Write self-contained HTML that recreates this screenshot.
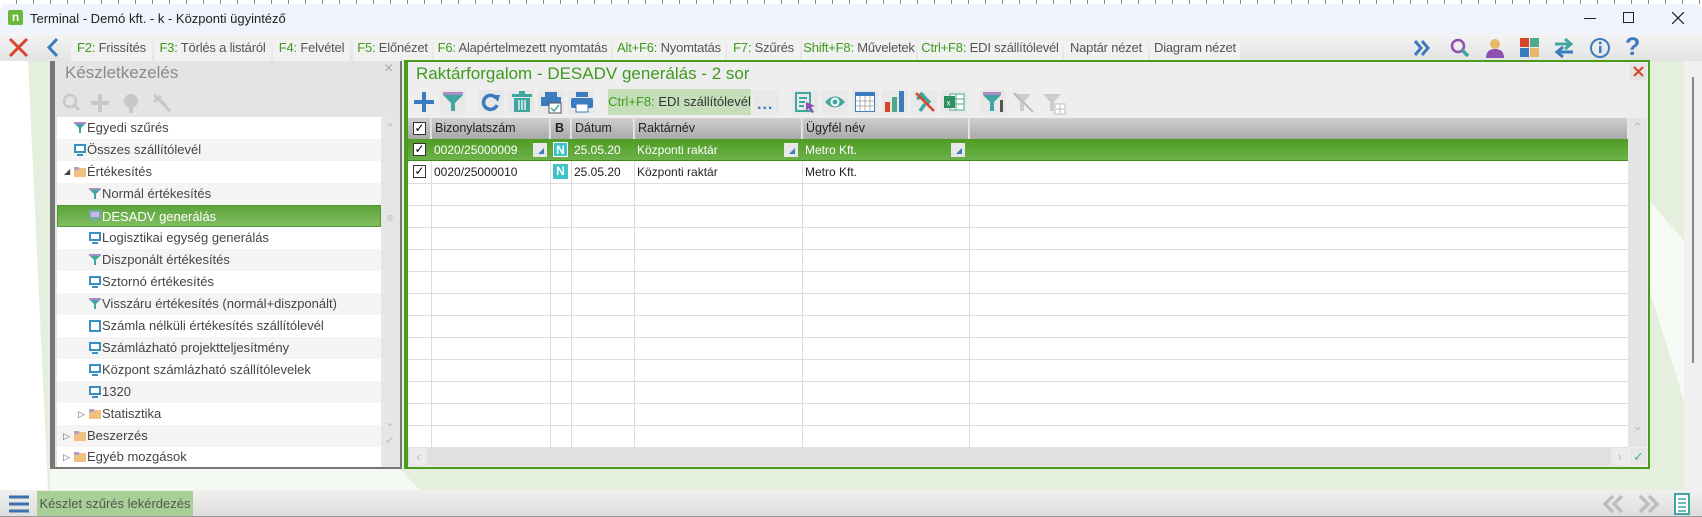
<!DOCTYPE html>
<html><head><meta charset="utf-8">
<style>
*{margin:0;padding:0;box-sizing:border-box}
body{width:1702px;height:517px;overflow:hidden;position:relative;background:#fff;font-family:"Liberation Sans",sans-serif;color:#444}
.a{position:absolute}
.tb{position:absolute;top:35px;height:26px;background:#f1f1f1;font-size:13px;line-height:26px;text-align:center;color:#555;letter-spacing:-0.2px}
.tb b{font-weight:normal;color:#3f9a1a}
.row{position:absolute;left:57px;width:324px;height:22px;font-size:13px;line-height:22px;color:#444}
.row span{position:absolute;top:0}
.gi{position:absolute;top:5px;width:12px;height:12px}
.hd{position:absolute;top:118px;height:21px;background:linear-gradient(#cfcfcf,#a9a9a9);font-size:12.5px;line-height:21px;color:#222;padding-left:4px;border-right:1px solid #e8e8e8}
.c{position:absolute;height:22px;font-size:12px;line-height:22px;padding-left:3px}
.vl{position:absolute;top:118px;height:329px;width:1px;background:#dcdcdc}
.hl{position:absolute;left:408px;width:1220px;height:1px;background:#dcdcdc}
.cb{position:absolute;width:13px;height:13px;border:1px solid #333;background:#fff;font-size:12px;line-height:11px;text-align:center;color:#000}
.ic{position:absolute;top:90px;width:26px;height:24px;background:#e8e8e8}
</style></head><body>
<!-- ruler -->
<div class="a" style="left:0;top:0;width:1702px;height:4px;background:repeating-linear-gradient(90deg,#fff 0 16px,#888 16px 17px)"></div>
<!-- title bar -->
<div class="a" style="left:0;top:4px;width:1702px;height:31px;background:#eff3fb;border-radius:6px 6px 0 0"></div>
<div class="a" style="left:8px;top:10px;width:15px;height:15px;background:#6cb83a;border-radius:2px;color:#fff;font-size:12px;font-weight:bold;line-height:14px;text-align:center">n</div>
<div class="a" style="left:30px;top:11px;font-size:13px;color:#222">Terminal - Demó kft. - k - Központi ügyintéző</div>
<div class="a" style="left:1584px;top:18px;width:12px;height:1px;background:#222"></div>
<div class="a" style="left:1623px;top:12px;width:11px;height:11px;border:1px solid #222"></div>
<svg class="a" style="left:1672px;top:12px" width="12" height="12"><path d="M0 0L12 12M12 0L0 12" stroke="#222" stroke-width="1.2"/></svg>
<!-- toolbar -->
<div class="a" style="left:0;top:34px;width:1702px;height:27px;background:linear-gradient(#f4f4f4,#e3e3e3)"></div>
<svg class="a" style="left:8px;top:37px" width="21" height="21"><path d="M2 2L19 19M19 2L2 19" stroke="#d9452b" stroke-width="3"/></svg>
<svg class="a" style="left:46px;top:37px" width="14" height="21"><path d="M11 2L3 10.5L11 19" stroke="#3b7bbf" stroke-width="3" fill="none"/></svg>
<div class="tb" style="left:71px;width:81px"><b>F2:</b> Frissítés</div>
<div class="tb" style="left:154px;width:117px"><b>F3:</b> Törlés a listáról</div>
<div class="tb" style="left:273px;width:77px"><b>F4:</b> Felvétel</div>
<div class="tb" style="left:353px;width:79px"><b>F5:</b> Előnézet</div>
<div class="tb" style="left:434px;width:177px"><b>F6:</b> Alapértelmezett nyomtatás</div>
<div class="tb" style="left:613px;width:112px"><b>Alt+F6:</b> Nyomtatás</div>
<div class="tb" style="left:727px;width:73px"><b>F7:</b> Szűrés</div>
<div class="tb" style="left:802px;width:114px"><b>Shift+F8:</b> Műveletek</div>
<div class="tb" style="left:918px;width:144px"><b>Ctrl+F8:</b> EDI szállítólevél</div>
<div class="tb" style="left:1064px;width:84px">Naptár nézet</div>
<div class="tb" style="left:1150px;width:90px">Diagram nézet</div>
<!-- right icons -->
<svg class="a" style="left:1412px;top:38px" width="20" height="20"><path d="M3 3L9 10L3 17M10 3L16 10L10 17" stroke="#3b7bbf" stroke-width="3" fill="none"/></svg>
<svg class="a" style="left:1449px;top:37px" width="22" height="22"><circle cx="9" cy="9" r="6" stroke="#8e4fb0" stroke-width="2.5" fill="none"/><path d="M13 13L19 19" stroke="#3fa7a0" stroke-width="3.5"/></svg>
<svg class="a" style="left:1484px;top:37px" width="22" height="22"><circle cx="11" cy="7" r="5" fill="#e8b868"/><path d="M2 21Q2 12 11 12Q20 12 20 21Z" fill="#8e4fb0"/></svg>
<svg class="a" style="left:1520px;top:38px" width="20" height="20"><rect x="0" y="0" width="9" height="9" fill="#d9452b"/><rect x="10" y="0" width="9" height="9" fill="#4daa8a"/><rect x="0" y="10" width="9" height="9" fill="#3b7bbf"/><rect x="10" y="10" width="9" height="9" fill="#e8b868"/></svg>
<svg class="a" style="left:1553px;top:37px" width="22" height="22"><path d="M2 7H16M12 2L18 7L12 12" stroke="#3fa7a0" stroke-width="3" fill="none"/><path d="M20 15H6M10 10L4 15L10 20" stroke="#3b7bbf" stroke-width="3" fill="none"/></svg>
<svg class="a" style="left:1589px;top:37px" width="22" height="22"><circle cx="11" cy="11" r="9" stroke="#3b7bbf" stroke-width="2" fill="none"/><rect x="10" y="9" width="2.5" height="7" fill="#3b7bbf"/><circle cx="11.2" cy="6" r="1.5" fill="#3b7bbf"/></svg>
<div class="a" style="left:1625px;top:33px;font-size:25px;font-weight:bold;color:#3b7bbf">?</div>
<!-- content bg -->
<svg class="a" style="left:0;top:61px" width="1702" height="429"><rect width="1702" height="429" fill="#e4efdd"/><polygon points="0,0 28,0 48,429 0,429" fill="#fff"/><polygon points="50,408 400,408 420,429 50,429" fill="#fff" opacity="0.6"/><polygon points="1650,140 1684,180 1684,340 1650,230" fill="#f6faf4"/><rect x="1684" y="0" width="18" height="429" fill="#f0f0f0"/><rect x="1692" y="16" width="2" height="286" fill="#888"/></svg>
<!-- left panel -->
<div class="a" style="left:50px;top:61px;width:352px;height:408px;background:#e4e4e4;border:5px solid #777;border-top:none;border-right-width:2px;border-bottom-width:2px"></div>
<div class="a" style="left:65px;top:63px;font-size:17px;color:#8a8a8a">Készletkezelés</div>
<div class="a" style="left:384px;top:60px;font-size:16px;color:#aaa">×</div>
<svg class="a" style="left:61px;top:92px" width="120" height="22"><circle cx="9" cy="9" r="6" stroke="#c8c8c8" stroke-width="2.5" fill="none"/><path d="M13 13L18 18" stroke="#c8c8c8" stroke-width="3"/><path d="M39 2V20M30 11H48" stroke="#c8c8c8" stroke-width="4"/><circle cx="70" cy="9" r="7" fill="#c8c8c8"/><rect x="68" y="14" width="4" height="7" fill="#c8c8c8"/><path d="M93 3L109 19M97 6L105 14M93 10L100 4" stroke="#c8c8c8" stroke-width="3"/></svg>
<div class="a" style="left:57px;top:117px;width:324px;height:350px;background:#fff"></div>
<div class="a" style="left:381px;top:117px;width:18px;height:350px;background:#e6e6e6;color:#bbb;font-size:12px;text-align:center"><div style="margin-top:4px">⌃</div><div style="margin-top:76px">≡</div><div style="margin-top:190px">⌄</div><div style="margin-top:4px">✓</div></div>
<!-- tree rows -->
<div class="row" style="top:117px"><svg class="gi" style="left:17px" viewBox="0 0 12 12"><path d="M0 1H12L7 6V11H5V6Z" fill="#3fa7a0"/><rect width="12" height="2" fill="#a98cc8"/></svg><span style="left:30px">Egyedi szűrés</span></div>
<div class="row" style="top:139px;background:#f4f4f4"><svg class="gi" style="left:17px" viewBox="0 0 12 12"><rect x="0" y="0" width="12" height="9" fill="#3b8fbf"/><rect x="2" y="2" width="8" height="5" fill="#fff"/><rect x="3" y="10" width="6" height="2" fill="#3b8fbf"/></svg><span style="left:30px">Összes szállítólevél</span></div>
<div class="row" style="top:161px"><span style="left:7px;font-size:8px;color:#444">◢</span><svg class="gi" style="left:17px" viewBox="0 0 12 12"><rect x="0" y="2" width="12" height="9" fill="#f0c080"/><rect x="0" y="1" width="5" height="3" fill="#b89ad0"/></svg><span style="left:30px">Értékesítés</span></div>
<div class="row" style="top:183px;background:#f4f4f4"><svg class="gi" style="left:32px" viewBox="0 0 12 12"><path d="M0 1H12L7 6V11H5V6Z" fill="#3fa7a0"/><rect width="12" height="2" fill="#a98cc8"/></svg><span style="left:45px">Normál értékesítés</span></div>
<div class="row" style="top:205px;background:linear-gradient(#5ca43a,#82bd62);color:#fff;border:1px solid #4f9a30"><svg class="gi" style="left:31px;top:4px" viewBox="0 0 12 12"><rect x="0" y="0" width="12" height="9" fill="#7aa"/><rect x="2" y="2" width="8" height="5" fill="#c9b8e8"/><rect x="3" y="10" width="6" height="2" fill="#7aa"/></svg><span style="left:44px">DESADV generálás</span></div>
<div class="row" style="top:227px"><svg class="gi" style="left:32px" viewBox="0 0 12 12"><rect x="0" y="0" width="12" height="9" fill="#3b8fbf"/><rect x="2" y="2" width="8" height="5" fill="#fff"/><rect x="3" y="10" width="6" height="2" fill="#3b8fbf"/></svg><span style="left:45px">Logisztikai egység generálás</span></div>
<div class="row" style="top:249px;background:#f4f4f4"><svg class="gi" style="left:32px" viewBox="0 0 12 12"><path d="M0 1H12L7 6V11H5V6Z" fill="#3fa7a0"/><rect width="12" height="2" fill="#a98cc8"/></svg><span style="left:45px">Diszponált értékesítés</span></div>
<div class="row" style="top:271px"><svg class="gi" style="left:32px" viewBox="0 0 12 12"><rect x="0" y="0" width="12" height="9" fill="#3b8fbf"/><rect x="2" y="2" width="8" height="5" fill="#fff"/><rect x="3" y="10" width="6" height="2" fill="#3b8fbf"/></svg><span style="left:45px">Sztornó értékesítés</span></div>
<div class="row" style="top:293px;background:#f4f4f4"><svg class="gi" style="left:32px" viewBox="0 0 12 12"><path d="M0 1H12L7 6V11H5V6Z" fill="#3fa7a0"/><rect width="12" height="2" fill="#a98cc8"/></svg><span style="left:45px">Visszáru értékesítés (normál+diszponált)</span></div>
<div class="row" style="top:315px"><svg class="gi" style="left:32px" viewBox="0 0 12 12"><rect x="0" y="0" width="12" height="12" fill="#3b8fbf"/><rect x="2" y="2" width="8" height="8" fill="#fff"/></svg><span style="left:45px">Számla nélküli értékesítés szállítólevél</span></div>
<div class="row" style="top:337px;background:#f4f4f4"><svg class="gi" style="left:32px" viewBox="0 0 12 12"><rect x="0" y="0" width="12" height="9" fill="#3b8fbf"/><rect x="2" y="2" width="8" height="5" fill="#fff"/><rect x="3" y="10" width="6" height="2" fill="#3b8fbf"/></svg><span style="left:45px">Számlázható projektteljesítmény</span></div>
<div class="row" style="top:359px"><svg class="gi" style="left:32px" viewBox="0 0 12 12"><rect x="0" y="0" width="12" height="9" fill="#3b8fbf"/><rect x="2" y="2" width="8" height="5" fill="#fff"/><rect x="3" y="10" width="6" height="2" fill="#3b8fbf"/></svg><span style="left:45px">Központ számlázható szállítólevelek</span></div>
<div class="row" style="top:381px;background:#f4f4f4"><svg class="gi" style="left:32px" viewBox="0 0 12 12"><rect x="0" y="0" width="12" height="9" fill="#3b8fbf"/><rect x="2" y="2" width="8" height="5" fill="#fff"/><rect x="3" y="10" width="6" height="2" fill="#3b8fbf"/></svg><span style="left:45px">1320</span></div>
<div class="row" style="top:403px"><span style="left:21px;font-size:9px;color:#666">▷</span><svg class="gi" style="left:32px" viewBox="0 0 12 12"><rect x="0" y="2" width="12" height="9" fill="#f0c080"/><rect x="0" y="1" width="5" height="3" fill="#b89ad0"/></svg><span style="left:45px">Statisztika</span></div>
<div class="row" style="top:425px;background:#f4f4f4"><span style="left:6px;font-size:9px;color:#666">▷</span><svg class="gi" style="left:17px" viewBox="0 0 12 12"><rect x="0" y="2" width="12" height="9" fill="#f0c080"/><rect x="0" y="1" width="5" height="3" fill="#b89ad0"/></svg><span style="left:30px">Beszerzés</span></div>
<div class="row" style="top:447px;height:20px;line-height:20px"><span style="left:6px;font-size:9px;color:#666">▷</span><svg class="gi" style="left:17px;top:4px" viewBox="0 0 12 12"><rect x="0" y="2" width="12" height="9" fill="#f0c080"/><rect x="0" y="1" width="5" height="3" fill="#b89ad0"/></svg><span style="left:30px">Egyéb mozgások</span></div>
<!-- right panel -->
<div class="a" style="left:404px;top:60px;width:1246px;height:409px;background:#eeeeee;border:2px solid #4a9a1e;border-left-width:4px"></div>
<div class="a" style="left:416px;top:64px;font-size:17px;color:#3f9a1e">Raktárforgalom - DESADV generálás - 2 sor</div>
<div class="a" style="left:1630px;top:63px;width:17px;height:17px;background:#e4e4e4"></div>
<svg class="a" style="left:1633px;top:66px" width="11" height="11"><path d="M1 1L10 10M10 1L1 10" stroke="#d9452b" stroke-width="2"/></svg>
<!-- grid toolbar -->
<svg class="a" style="left:412px;top:90px" width="24" height="24"><path d="M12 2V22M2 12H22" stroke="#3b7bbf" stroke-width="4"/></svg>
<div class="ic" style="left:440px"></div><svg class="a" style="left:443px;top:92px" width="20" height="20"><rect width="20" height="3" fill="#a98cc8"/><path d="M0 3H20L12 11V19H8V11Z" fill="#3fa7a0"/></svg>
<div class="ic" style="left:478px"></div><svg class="a" style="left:481px;top:92px" width="20" height="20"><path d="M15 6A7 7 0 1 0 16 13" stroke="#3b7bbf" stroke-width="3.5" fill="none"/><path d="M11 3L19 3L17 10Z" fill="#3b7bbf"/></svg>
<div class="ic" style="left:508px"></div><svg class="a" style="left:512px;top:91px" width="20" height="22"><rect x="0" y="3" width="20" height="3" fill="#3fa7a0"/><rect x="7" y="0" width="6" height="3" fill="#3fa7a0"/><rect x="2" y="7" width="16" height="14" fill="#3fa7a0"/><path d="M7 9V19M10 9V19M13 9V19" stroke="#fff" stroke-width="1.3"/></svg>
<div class="ic" style="left:538px"></div><svg class="a" style="left:541px;top:92px" width="22" height="22"><rect x="4" y="0" width="12" height="5" fill="#3b7bbf"/><rect x="0" y="5" width="20" height="9" fill="#3b7bbf"/><rect x="8" y="11" width="12" height="10" fill="#fff" stroke="#555"/><path d="M10 16L13 19L18 13" stroke="#3fa7a0" stroke-width="1.5" fill="none"/></svg>
<div class="ic" style="left:568px"></div><svg class="a" style="left:571px;top:92px" width="22" height="22"><rect x="5" y="0" width="12" height="5" fill="#3b7bbf"/><rect x="0" y="6" width="22" height="10" rx="2" fill="#3b7bbf"/><rect x="5" y="12" width="12" height="8" fill="#fff" stroke="#3b7bbf"/></svg>
<div class="a" style="left:608px;top:89px;width:143px;height:26px;background:#c5dfbb;font-size:13px;line-height:26px;text-align:center;color:#333"><span style="color:#3f9a1a">Ctrl+F8:</span> EDI szállítólevél</div>
<div class="ic" style="left:753px"></div><div class="a" style="left:757px;top:96px;font-size:16px;color:#3b7bbf;font-weight:bold;letter-spacing:1px">...</div>
<div class="ic" style="left:792px"></div><svg class="a" style="left:795px;top:92px" width="22" height="22"><rect x="1" y="1" width="14" height="18" fill="none" stroke="#3fa7a0" stroke-width="2"/><path d="M4 6H12M4 10H10M4 14H9" stroke="#3fa7a0" stroke-width="2"/><path d="M11 10L20 14L16 15L19 20L17 21L14 16L11 19Z" fill="#8e4fb0"/></svg>
<div class="ic" style="left:822px"></div><svg class="a" style="left:824px;top:93px" width="22" height="18"><path d="M1 9Q11 -2 21 9Q11 20 1 9Z" fill="#3fa7a0"/><circle cx="11" cy="9" r="4.5" fill="#fff"/><circle cx="11" cy="9" r="2.5" fill="#3fa7a0"/></svg>
<div class="ic" style="left:852px"></div><svg class="a" style="left:855px;top:92px" width="20" height="20"><rect x="0.5" y="0.5" width="19" height="19" fill="#fff" stroke="#3b7bbf"/><rect width="20" height="4" fill="#3b7bbf"/><path d="M5 4V20M10 4V20M15 4V20M0 9H20M0 14H20" stroke="#999" stroke-width="0.8"/></svg>
<div class="ic" style="left:882px"></div><svg class="a" style="left:885px;top:91px" width="20" height="21"><rect x="0" y="11" width="5" height="10" fill="#d9452b"/><rect x="7" y="6" width="5" height="15" fill="#4daa8a"/><rect x="14" y="0" width="5" height="21" fill="#3b7bbf"/></svg>
<div class="ic" style="left:911px"></div><svg class="a" style="left:914px;top:91px" width="22" height="22"><path d="M6 2L16 12M3 8L10 3M11 13L6 20" stroke="#3fa7a0" stroke-width="3.5"/><path d="M2 2L20 20" stroke="#d9452b" stroke-width="2.5"/></svg>
<div class="ic" style="left:941px"></div><svg class="a" style="left:944px;top:92px" width="21" height="20"><rect x="6" y="2" width="14" height="16" fill="#fff" stroke="#4daa8a"/><path d="M12 2V18M6 7H20M6 12H20" stroke="#4daa8a"/><rect x="0" y="4" width="11" height="12" fill="#2e9060"/><text x="2.5" y="13.5" font-size="8" fill="#fff" font-family="Liberation Sans">x</text></svg>
<div class="ic" style="left:980px"></div><svg class="a" style="left:983px;top:92px" width="22" height="22"><rect width="18" height="3" fill="#a98cc8"/><path d="M0 3H18L11 10V19H7V10Z" fill="#3fa7a0"/><rect x="17" y="8" width="3" height="12" fill="#555"/></svg>
<svg class="a" style="left:1013px;top:92px" width="22" height="22"><path d="M0 2H18L11 10V19H7V10Z" fill="#ccc"/><path d="M1 1L20 20" stroke="#bbb" stroke-width="2"/></svg>
<svg class="a" style="left:1043px;top:92px" width="24" height="24"><path d="M0 2H18L11 10V19H7V10Z" fill="#ccc"/><rect x="12" y="12" width="10" height="10" fill="#fff" stroke="#bbb"/><path d="M17 13V21M13 17H21" stroke="#bbb"/></svg>
<!-- grid -->
<div class="a" style="left:408px;top:118px;width:1220px;height:329px;background:#fff"></div>
<div class="hd" style="left:408px;width:23px"></div><div class="cb" style="left:413px;top:122px">✓</div>
<div class="hd" style="left:431px;width:119px">Bizonylatszám</div>
<div class="hd" style="left:550px;width:21px;font-weight:bold;padding-left:5px">B</div>
<div class="hd" style="left:571px;width:63px">Dátum</div>
<div class="hd" style="left:634px;width:168px">Raktárnév</div>
<div class="hd" style="left:802px;width:167px">Ügyfél név</div>
<div class="hd" style="left:969px;width:659px"></div>
<div class="a" style="left:1628px;top:118px;width:19px;height:329px;background:#e4e4e4;color:#bbb;font-size:12px;text-align:center"><div style="margin-top:2px">⌃</div><div style="margin-top:285px">⌄</div></div>
<!-- grid lines -->
<div class="hl" style="top:183px"></div><div class="hl" style="top:205px"></div><div class="hl" style="top:227px"></div><div class="hl" style="top:249px"></div><div class="hl" style="top:271px"></div><div class="hl" style="top:293px"></div><div class="hl" style="top:315px"></div><div class="hl" style="top:337px"></div><div class="hl" style="top:359px"></div><div class="hl" style="top:381px"></div><div class="hl" style="top:403px"></div><div class="hl" style="top:425px"></div>
<div class="vl" style="left:431px"></div><div class="vl" style="left:550px"></div><div class="vl" style="left:571px"></div><div class="vl" style="left:634px"></div><div class="vl" style="left:802px"></div><div class="vl" style="left:969px"></div>
<!-- row 1 selected -->
<div class="a" style="left:408px;top:139px;width:1220px;height:22px;background:linear-gradient(#4e9c22,#6cb24a);border-bottom:1px solid #3d8a1a"></div>
<div class="cb" style="left:413px;top:143px">✓</div>
<div class="c" style="left:431px;top:139px;color:#fff">0020/25000009</div>
<div class="a" style="left:533px;top:143px;width:14px;height:14px;background:#e8e8e8"><div style="position:absolute;right:3px;bottom:3px;width:0;height:0;border-left:6px solid transparent;border-bottom:6px solid #3b7bbf"></div></div>
<div class="a" style="left:553px;top:142px;width:15px;height:15px;background:#3cc4c8;color:#fff;font-weight:bold;font-size:12px;line-height:15px;text-align:center;border:1px solid #fff">N</div>
<div class="c" style="left:571px;top:139px;color:#fff">25.05.20</div>
<div class="c" style="left:634px;top:139px;color:#fff">Központi raktár</div>
<div class="a" style="left:784px;top:143px;width:14px;height:14px;background:#e8e8e8"><div style="position:absolute;right:3px;bottom:3px;width:0;height:0;border-left:6px solid transparent;border-bottom:6px solid #3b7bbf"></div></div>
<div class="c" style="left:802px;top:139px;color:#fff">Metro Kft.</div>
<div class="a" style="left:951px;top:143px;width:14px;height:14px;background:#e8e8e8"><div style="position:absolute;right:3px;bottom:3px;width:0;height:0;border-left:6px solid transparent;border-bottom:6px solid #3b7bbf"></div></div>
<!-- row 2 -->
<div class="cb" style="left:413px;top:165px">✓</div>
<div class="c" style="left:431px;top:161px;color:#222">0020/25000010</div>
<div class="a" style="left:553px;top:164px;width:15px;height:15px;background:#3cc4c8;color:#fff;font-weight:bold;font-size:12px;line-height:15px;text-align:center">N</div>
<div class="c" style="left:571px;top:161px;color:#222">25.05.20</div>
<div class="c" style="left:634px;top:161px;color:#222">Központi raktár</div>
<div class="c" style="left:802px;top:161px;color:#222">Metro Kft.</div>
<!-- hscroll -->
<div class="a" style="left:408px;top:447px;width:1220px;height:19px;background:#e0e0e0"></div>
<div class="a" style="left:410px;top:448px;width:17px;height:17px;background:#ebebeb;color:#bbb;font-size:13px;text-align:center;line-height:17px">‹</div>
<div class="a" style="left:1611px;top:448px;width:17px;height:17px;background:#ebebeb;color:#bbb;font-size:13px;text-align:center;line-height:17px">›</div>
<div class="a" style="left:1630px;top:448px;width:17px;height:17px;background:#e6e6e6;color:#4daa8a;font-size:13px;text-align:center;line-height:17px">✓</div>
<!-- bottom bar -->
<div class="a" style="left:0;top:490px;width:1702px;height:27px;background:linear-gradient(#f0f0f0,#dedede);border-bottom:1px solid #999"></div>
<svg class="a" style="left:9px;top:495px" width="20" height="18"><path d="M0 2H20M0 9H20M0 16H20" stroke="#3b6fb0" stroke-width="3"/></svg>
<div class="a" style="left:37px;top:491px;width:156px;height:25px;background:#a8d096;font-size:13px;line-height:25px;text-align:center;color:#555">Készlet szűrés lekérdezés</div>
<svg class="a" style="left:1602px;top:494px" width="24" height="20"><path d="M11 2L3 10L11 18M20 2L12 10L20 18" stroke="#bdbdbd" stroke-width="3.5" fill="none"/></svg>
<svg class="a" style="left:1637px;top:494px" width="24" height="20"><path d="M3 2L11 10L3 18M12 2L20 10L12 18" stroke="#bdbdbd" stroke-width="3.5" fill="none"/></svg>
<svg class="a" style="left:1674px;top:493px" width="16" height="22"><rect x="1" y="1" width="14" height="20" fill="#fff" stroke="#3fa7a0" stroke-width="2"/><path d="M4 6H12M4 10H12M4 14H12M4 18H12" stroke="#3fa7a0" stroke-width="1.5"/></svg>
</body></html>
